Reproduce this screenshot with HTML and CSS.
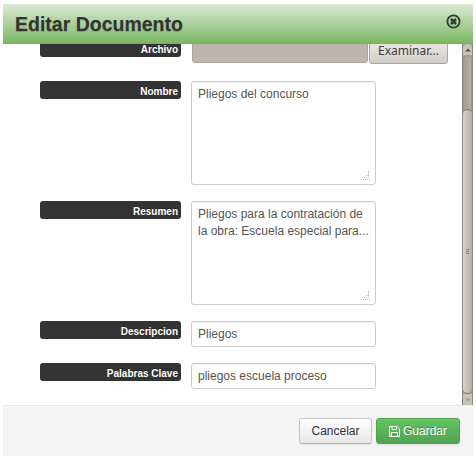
FILE: index.html
```html
<!DOCTYPE html>
<html lang="es">
<head>
<meta charset="utf-8">
<title>Editar Documento</title>
<link rel="stylesheet" href="styles.css">
</head>
<body>
<section class="modal">
  <header class="modal-header">
    <h1>Editar Documento</h1>
    <svg class="close" viewBox="0 0 15 15" width="15" height="15"><circle cx="7.5" cy="7.5" r="6.1" fill="none" stroke="#2c3f2a" stroke-width="1.8"/><path d="M5 5l5 5M10 5l-5 5" stroke="#2c3f2a" stroke-width="2.5"/></svg>
  </header>
  <div class="modal-body">
    <form class="form">
      <div class="row"><span class="label">Archivo</span><div class="file"><span class="file-name"></span><span class="file-button">Examinar...</span></div></div>
      <div class="row"><span class="label">Nombre</span><div class="field area">Pliegos del concurso<svg class="grip" viewBox="0 0 9 9" width="9" height="9"><path d="M7 .5h1M7 2.5h1M5 4.5h1M7 4.5h1M3 6.5h1M5 6.5h1M7 6.5h1M0 8.500h1M2 8.500h1M4 8.500h1M6 8.500h1M8 8.500h1" stroke="#aaa"/></svg></div></div>
      <div class="row"><span class="label">Resumen</span><div class="field area">Pliegos para la contratación de<br>la obra: Escuela especial para...<svg class="grip" viewBox="0 0 9 9" width="9" height="9"><path d="M7 .5h1M7 2.5h1M5 4.5h1M7 4.5h1M3 6.5h1M5 6.5h1M7 6.5h1M0 8.500h1M2 8.500h1M4 8.500h1M6 8.500h1M8 8.500h1" stroke="#aaa"/></svg></div></div>
      <div class="row"><span class="label">Descripcion</span><div class="field">Pliegos</div></div>
      <div class="row"><span class="label">Palabras Clave</span><div class="field">pliegos escuela proceso</div></div>
    </form>
    <div class="scrollbar">
      <span class="step"><svg viewBox="0 0 6 4" width="6" height="4"><path d="M0 3.500L3 .5l3 3z" fill="#555049"/></svg></span>
      <span class="track"></span>
      <span class="thumb"><i></i><i></i><i></i></span>
      <span class="step step-down"><svg viewBox="0 0 6 4" width="6" height="4"><path d="M0 .5L3 3.500l3-3z" fill="#aaa59b"/></svg></span>
    </div>
  </div>
  <footer class="modal-footer">
    <button class="btn" type="button">Cancelar</button>
    <button class="btn btn-save" type="button"><svg viewBox="0 0 11 11" width="11" height="11"><path d="M.5.5h7.500l2.500 2.500v7.500H.5zM3 .5v3h4.500v-3M2.500 10.500v-4h6v4" fill="none" stroke="#fff"/></svg>Guardar</button>
  </footer>
</section>
</body>
</html>
```
FILE: styles.css
```css
* { box-sizing: border-box; }
body { margin: 0; padding: 4px 3px 5px; background: #fff; font: 12px/17px "Liberation Sans", Arial, sans-serif; color: #555; }
.modal { width: 470px; height: 452px; display: flex; flex-direction: column; }
.modal-header { height: 40px; display: flex; align-items: center; justify-content: space-between; padding: 0 12px; background: linear-gradient(#dbead6, #7cb765); border-bottom: 1px solid #78b060; }
.modal-header h1 { margin: 0; font-size: 19.5px; line-height: 24px; color: #333; text-shadow: 0 1px 1px rgba(0, 0, 0, .2); }
.close { margin-top: -4px; }
.modal-body { height: 361px; overflow: hidden; display: flex; justify-content: space-between; }
.form { margin: -5px 0 0 37px; display: flex; flex-direction: column; gap: 16px; }
.row { display: flex; gap: 10px; align-items: flex-start; }
.label { width: 141px; height: 18px; padding: 2px 3px 0 0; border-radius: 3px; background: #333; color: #fff; font-size: 10px; line-height: 17px; font-weight: bold; text-align: right; text-shadow: 0 -1px 0 rgba(0, 0, 0, .25); }
.field { position: relative; width: 185px; height: 26px; padding: 4px 6px; border: 1px solid #ccc; border-radius: 3px; background: #fff; white-space: nowrap; box-shadow: inset 0 1px 1px rgba(0, 0, 0, .06); }
.area { height: 104px; }
.grip { position: absolute; right: 5px; bottom: 4px; }
.file { height: 26px; display: flex; gap: 1px; padding-left: 1px; }
.file-name { width: 176px; height: 24px; border: 1px solid #aaa49c; border-radius: 3px; background: #bcb6af; }
.file-button { width: 79px; height: 25px; border: 1px solid #aaa59f; border-radius: 3px; background: linear-gradient(#ebe9e7, #d2cdc9); color: #3c3c3c; font: 12px/20px "Noto Sans", sans-serif; text-align: center; padding-top: 1px; }
.scrollbar { width: 11px; display: flex; flex-direction: column; background: #aaa59b; border-left: 1px solid #8b867d; border-right: 1px solid #8b867d; }
.step { height: 11px; display: flex; align-items: center; justify-content: center; background: #c9c4bb; border-radius: 5px 5px 0 0; }
.step-down { background: #c8c3b9; border-radius: 0; }
.track { height: 54px; background: linear-gradient(90deg, #a39e94, #b5b0a6); border: 1px solid #99948a; border-radius: 5px 5px 0 0; border-bottom: 0; }
.thumb { height: 285px; display: flex; flex-direction: column; align-items: center; justify-content: center; gap: 1px; border: 1px solid #77736b; border-left: 0; border-right: 0; border-radius: 5px; background: linear-gradient(90deg, #d7d3cd, #b5afa6); }
.thumb i { width: 3px; height: 1px; background: #858078; }
.modal-footer { height: 51px; display: flex; align-items: flex-start; justify-content: flex-end; gap: 4px; padding: 12px 13px 0 0; background: #f4f4f4; border-top: 1px solid #e6e6e6; box-shadow: inset 0 1px 0 #fafafa; }
.btn { width: 73px; height: 26px; padding: 0; border: 1px solid #c8c8c8; border-bottom-color: #b3b3b3; border-radius: 3px; background: linear-gradient(#fff, #e6e6e6); color: #333; font: 12px/17px "Liberation Sans", Arial, sans-serif; box-shadow: 0 1px 2px rgba(0, 0, 0, .08); }
.btn-save { width: 84px; display: flex; align-items: center; justify-content: center; gap: 3px; border-color: #51a351; background: linear-gradient(#62c462, #51a351); color: #fff; text-shadow: 0 -1px 0 rgba(0, 0, 0, .25); }
```
